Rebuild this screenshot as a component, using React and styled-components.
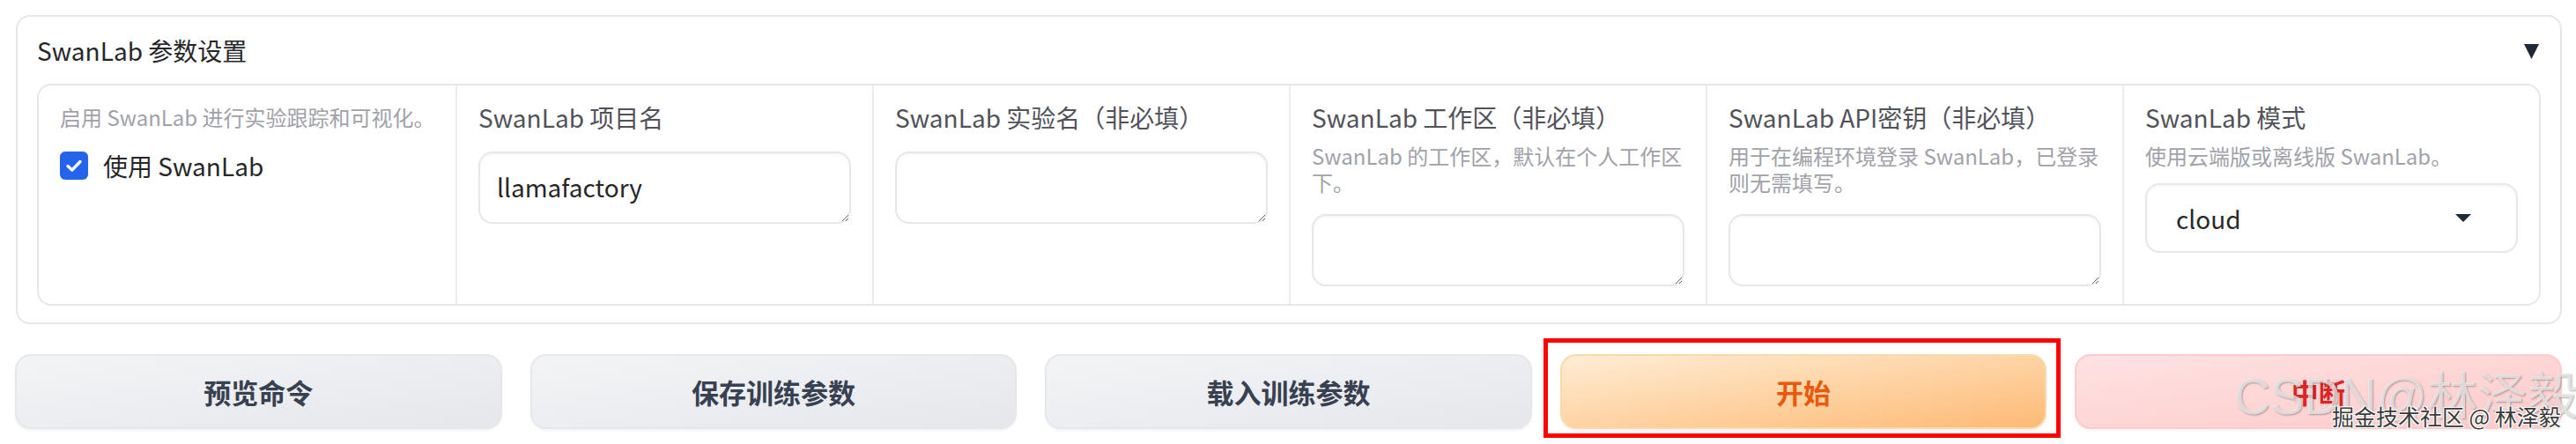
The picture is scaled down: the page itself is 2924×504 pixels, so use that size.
import styled, { createGlobalStyle } from "styled-components";

const GlobalStyle = createGlobalStyle`
  html, body {
    margin: 0;
    padding: 0;
    background: #ffffff;
    overflow: hidden;
  }
  body {
    font-family: "Noto Sans CJK SC", "Noto Sans", sans-serif;
    color: #27272a;
  }
  * {
    box-sizing: border-box;
  }
`;

const fields = [
  { label: "SwanLab 项目名", kind: "textarea", value: "llamafactory" },
  { label: "SwanLab 实验名（非必填）", kind: "textarea", value: "" },
  {
    label: "SwanLab 工作区（非必填）",
    info: "SwanLab 的工作区，默认在个人工作区下。",
    kind: "textarea",
    value: "",
  },
  {
    label: "SwanLab API密钥（非必填）",
    info: "用于在编程环境登录 SwanLab，已登录则无需填写。",
    kind: "textarea",
    value: "",
  },
  {
    label: "SwanLab 模式",
    info: "使用云端版或离线版 SwanLab。",
    kind: "select",
    value: "cloud",
  },
];

const buttons = [
  { text: "预览命令", variant: "secondary" },
  { text: "保存训练参数", variant: "secondary" },
  { text: "载入训练参数", variant: "secondary" },
  { text: "开始", variant: "primary", marked: true },
  { text: "中断", variant: "stop" },
];

const App = () => {
  return (
    <Page>
      <GlobalStyle />
      <Accordion>
        <Header>
          <Title>SwanLab 参数设置</Title>
          <Caret width="17" height="17" viewBox="0 0 17 17">
            <polygon points="0,0 17,0 8.5,17" fill="#1f2937" />
          </Caret>
        </Header>
        <FieldGrid>
          <Column>
            <Info $lineHeight={36} $nowrap>
              启用 SwanLab 进行实验跟踪和可视化。
            </Info>
            <CheckRow>
              <CheckBox>
                <svg width="20" height="16" viewBox="0 0 20 16">
                  <path
                    d="M3 8.5 L7.8 13 L17 3.5"
                    fill="none"
                    stroke="#ffffff"
                    strokeWidth="3.4"
                    strokeLinecap="round"
                    strokeLinejoin="round"
                  />
                </svg>
              </CheckBox>
              <CheckLabel>使用 SwanLab</CheckLabel>
            </CheckRow>
          </Column>
          {fields.map((field) => (
            <Column key={field.label}>
              <Label>{field.label}</Label>
              {field.info && <Info $gap={11}>{field.info}</Info>}
              {field.kind === "textarea" ? (
                <TextArea defaultValue={field.value} />
              ) : (
                <Select>
                  <span>{field.value}</span>
                  <svg width="18" height="9" viewBox="0 0 18 9">
                    <polygon points="0,0 18,0 9,9" fill="#1f2937" />
                  </svg>
                </Select>
              )}
            </Column>
          ))}
        </FieldGrid>
      </Accordion>
      <ButtonRow>
        {buttons.map((btn) => (
          <Button key={btn.text} $variant={btn.variant}>
            {btn.text}
            {btn.marked && <Mark />}
          </Button>
        ))}
      </ButtonRow>
      <WatermarkBig>CSDN@林泽毅</WatermarkBig>
      <WatermarkSmall>掘金技术社区 @ 林泽毅</WatermarkSmall>
    </Page>
  );
};

export default App;

const Page = styled.div`
  position: relative;
  width: 2924px;
  height: 504px;
  padding: 17px 16px 0 18px;
`;

const Accordion = styled.div`
  border: 2px solid #e5e7eb;
  border-radius: 16px;
  padding: 20px 22px 19px 22px;
  background: #ffffff;
`;

const Header = styled.div`
  display: flex;
  align-items: center;
  justify-content: space-between;
  height: 36px;
  margin-bottom: 20px;
`;

const Title = styled.span`
  font-size: 28px;
  line-height: 36px;
  color: #27272a;
`;

const Caret = styled.svg`
  margin-right: 2px;
  margin-top: 2px;
`;

const FieldGrid = styled.div`
  display: grid;
  grid-template-columns: repeat(6, 1fr);
  border: 2px solid #e5e7eb;
  border-radius: 16px;
  overflow: hidden;
`;

const Column = styled.div`
  display: flex;
  flex-direction: column;
  min-width: 0;
  padding: 18px 24px 20px 24px;
  & + & {
    border-left: 2px solid #ececec;
  }
`;

const Label = styled.span`
  font-size: 28px;
  line-height: 36px;
  color: #52525b;
`;

const Info = styled.span`
  font-size: 24px;
  line-height: ${(p) => p.$lineHeight || 30}px;
  margin-top: ${(p) => p.$gap || 0}px;
  white-space: ${(p) => (p.$nowrap ? "nowrap" : "normal")};
  color: #a1a1aa;
`;

const CheckRow = styled.div`
  display: flex;
  align-items: center;
  gap: 17px;
  margin-top: 19px;
`;

const CheckBox = styled.div`
  width: 32px;
  height: 32px;
  border-radius: 6px;
  background: #2563eb;
  display: flex;
  align-items: center;
  justify-content: center;
`;

const CheckLabel = styled.span`
  font-size: 28px;
  line-height: 36px;
  color: #27272a;
`;

const TextArea = styled.textarea`
  display: block;
  width: 100%;
  height: 82px;
  margin-top: 21px;
  padding: 20px 19px;
  border: 2px solid #e5e7eb;
  border-radius: 16px;
  box-shadow: inset 0 2px 3px rgba(0, 0, 0, 0.04);
  background: #ffffff;
  font-family: "Noto Sans CJK SC", "Noto Sans", sans-serif;
  font-size: 28px;
  line-height: 36px;
  color: #27272a;
  outline: none;
  resize: vertical;
`;

const Select = styled.div`
  display: flex;
  align-items: center;
  justify-content: space-between;
  height: 79px;
  margin-top: 16px;
  padding: 0 51px 0 33px;
  border: 2px solid #e5e7eb;
  border-radius: 16px;
  box-shadow: inset 0 2px 3px rgba(0, 0, 0, 0.04);
  font-size: 28px;
  color: #27272a;
`;

const variants = {
  secondary: {
    bg: "linear-gradient(to bottom right, #f3f4f6, #e5e7eb)",
    border: "#e5e7eb",
    color: "#374151",
  },
  primary: {
    bg: "linear-gradient(to bottom right, #ffedd5, #fdba74)",
    border: "#fed7aa",
    color: "#ea580c",
  },
  stop: {
    bg: "linear-gradient(to bottom right, #fee2e2, #fecaca)",
    border: "#fecaca",
    color: "#dc2626",
  },
};

const ButtonRow = styled.div`
  display: grid;
  grid-template-columns: repeat(5, 1fr);
  gap: 32px;
  margin-top: 34px;
  margin-left: -1px;
`;

const Button = styled.button`
  position: relative;
  height: 85px;
  border: 2px solid ${(p) => variants[p.$variant].border};
  border-radius: 18px;
  background: ${(p) => variants[p.$variant].bg};
  box-shadow: 0 2px 3px rgba(0, 0, 0, 0.05);
  color: ${(p) => variants[p.$variant].color};
  font-family: "Noto Sans CJK SC", "Noto Sans", sans-serif;
  font-size: 31px;
  font-weight: 700;
  cursor: pointer;
`;

const Mark = styled.span`
  position: absolute;
  top: -20px;
  bottom: -12px;
  left: -21px;
  right: -18px;
  border: 5px solid #ff0000;
  pointer-events: none;
`;

const WatermarkBig = styled.div`
  position: absolute;
  left: 2536px;
  top: 417px;
  font-family: "Liberation Sans", "Noto Sans CJK SC", sans-serif;
  font-size: 57px;
  line-height: 66px;
  color: rgba(238, 238, 238, 0.75);
  text-shadow: 1px 1px 2px rgba(0, 0, 0, 0.3);
  white-space: nowrap;
  pointer-events: none;
`;

const WatermarkSmall = styled.div`
  position: absolute;
  left: 2647px;
  top: 455px;
  font-family: "Noto Sans CJK SC", sans-serif;
  font-size: 25px;
  line-height: 34px;
  color: #3a3a3a;
  text-shadow: 1px 1px 0 #ffffff, -1px -1px 0 #ffffff, 1px -1px 0 #ffffff,
    -1px 1px 0 #ffffff;
  white-space: nowrap;
  pointer-events: none;
`;
